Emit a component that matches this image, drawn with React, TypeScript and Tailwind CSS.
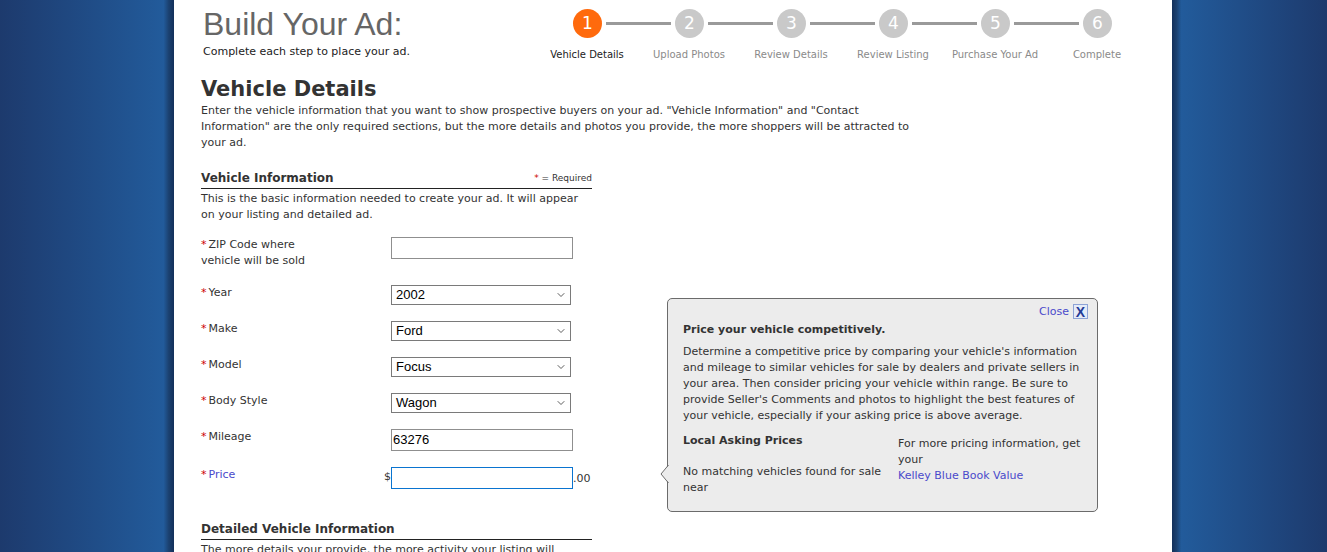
import { ChevronDown } from 'lucide-react';

const steps = ['Vehicle Details', 'Upload Photos', 'Review Details', 'Review Listing', 'Purchase Your Ad', 'Complete'];

type Field = { label: string; kind: 'input' | 'select'; value: string };

const fields: Field[] = [
  { label: 'Year', kind: 'select', value: '2002' },
  { label: 'Make', kind: 'select', value: 'Ford' },
  { label: 'Model', kind: 'select', value: 'Focus' },
  { label: 'Body Style', kind: 'select', value: 'Wagon' },
  { label: 'Mileage', kind: 'input', value: '63276' },
];

function Req() {
  return <span className="mr-[2px] text-[#cc0000]">*</span>;
}

function Stepper() {
  return (
    <div className="mt-[9px] w-[612px]">
      <div className="flex items-center pl-[37px]">
        {steps.map((s, i) => (
          <div key={s} className="flex items-center">
            {i > 0 ? <div className="mx-[4px] h-[3px] w-[65px] bg-[#9a9a9a]" /> : null}
            <div
              className={`flex h-[29px] w-[29px] items-center justify-center rounded-full text-[17px] leading-none text-white ${i === 0 ? 'bg-[#ff6a0d]' : 'bg-[#c9c9c9]'}`}
            >
              {i + 1}
            </div>
          </div>
        ))}
      </div>
      <div className="mt-[10px] grid grid-cols-6">
        {steps.map((s, i) => (
          <div key={s} className={`text-center text-[10px] leading-[14px] ${i === 0 ? 'text-[#222]' : 'text-[#8a8a8a]'}`}>
            {s}
          </div>
        ))}
      </div>
    </div>
  );
}

function Popup() {
  return (
    <div className="absolute left-[493px] top-[298px] w-[431px] rounded-[5px] border border-[#6b6b6b] bg-[#ececec] pb-[15px] pl-[15px] pr-[9px] pt-[5px] text-[11px] leading-[16px] text-[#333]">
      <svg className="absolute left-[-8px] top-[166px]" width="9" height="18" viewBox="0 0 9 18">
        <polygon points="9,0 1,9 9,18" fill="#ececec" />
        <polyline points="8.5,0 1,9 8.5,18" fill="none" stroke="#6b6b6b" strokeWidth="1" />
      </svg>
      <div className="flex h-[15px] items-center justify-end gap-[4px]">
        <span className="text-[#4a4acb]">Close</span>
        <span className="flex h-[15px] w-[15px] items-center justify-center border border-[#8ea3d6] bg-[#e4ebf8] font-['Liberation_Sans',Arial,sans-serif] text-[14px] font-bold leading-none text-[#233a96]">
          X
        </span>
      </div>
      <div className="mt-[3px] font-bold">Price your vehicle competitively.</div>
      <p className="mt-[6px] w-[400px]">
        Determine a competitive price by comparing your vehicle's information and mileage to similar vehicles for sale by dealers
        and private sellers in your area. Then consider pricing your vehicle within range. Be sure to provide Seller's Comments
        and photos to highlight the best features of your vehicle, especially if your asking price is above average.
      </p>
      <div className="mt-[9px] flex">
        <div className="w-[215px]">
          <div className="font-bold">Local Asking Prices</div>
          <div className="mt-[15px] w-[200px]">No matching vehicles found for sale near</div>
        </div>
        <div className="mt-[3px] w-[190px]">
          For more pricing information, get your
          <div className="text-[#4a4acb]">Kelley Blue Book Value</div>
        </div>
      </div>
    </div>
  );
}

export default function App() {
  return (
    <div className="flex h-[552px] w-full overflow-hidden font-['DejaVu_Sans',Verdana,sans-serif]">
      <div className="w-[174px] shrink-0 bg-[linear-gradient(to_right,#1d3a6d,#225b9b_94%,#1b4170_97%,#13305a)]" />
      <main className="relative w-[998px] shrink-0 bg-white pl-[27px] text-[#333]">
        <div className="flex">
          <div className="w-[335px]">
            <h1 className="mt-[6px] pl-[2px] font-['Liberation_Sans',Arial,sans-serif] text-[32px] leading-[36px] text-[#666]">Build Your Ad:</h1>
            <div className="mt-[2px] pl-[2px] text-[11px] leading-[16px] text-[#222]">Complete each step to place your ad.</div>
          </div>
          <Stepper />
        </div>

        <h2 className="mt-[13px] text-[21px] font-bold leading-[28px] text-[#333]">Vehicle Details</h2>
        <p className="w-[715px] text-[11px] leading-[16px]">
          Enter the vehicle information that you want to show prospective buyers on your ad. "Vehicle Information" and "Contact
          Information" are the only required sections, but the more details and photos you provide, the more shoppers will be
          attracted to your ad.
        </p>

        <section className="mt-[19px] w-[391px] text-[11px] leading-[16px]">
          <div className="flex items-end justify-between border-b border-[#222] pb-[2px]">
            <span className="text-[12px] font-bold text-[#333]">Vehicle Information</span>
            <span className="text-[9px] text-[#333]">
              <span className="text-[#cc0000]">*</span> = Required
            </span>
          </div>
          <p className="mt-[2px]">This is the basic information needed to create your ad. It will appear on your listing and detailed ad.</p>

          <div className="mt-[14px] flex flex-col gap-[16px]">
            <div className="flex">
              <div className="w-[190px]">
                <Req />
                ZIP Code where
                <br />
                vehicle will be sold
              </div>
              <input className="h-[22px] w-[182px] border border-[#8f8f8f] bg-white px-[3px] text-[12px] outline-none" />
            </div>
            {fields.map((f) => (
              <div key={f.label} className="flex">
                <div className="w-[190px]">
                  <Req />
                  {f.label}
                </div>
                {f.kind === 'select' ? (
                  <div className="flex h-[20px] w-[180px] items-center justify-between border border-[#7a7a7a] bg-white pl-[4px] pr-[3px] font-['Liberation_Sans',Arial,sans-serif] text-[13px] text-black">
                    <span>{f.value}</span>
                    <ChevronDown size={12} strokeWidth={1.6} className="text-[#333]" />
                  </div>
                ) : (
                  <div className="flex h-[22px] w-[182px] items-center border border-[#8f8f8f] bg-white px-[1px] font-['Liberation_Sans',Arial,sans-serif] text-[13px] text-black">
                    {f.value}
                  </div>
                )}
              </div>
            ))}
            <div className="flex">
              <div className="flex w-[190px] justify-between">
                <span className="text-[#4a4acb]">
                  <Req />
                  Price
                </span>
                <span className="mt-[2px]">$</span>
              </div>
              <div className="h-[22px] w-[182px] border border-[#0a74d0] bg-white" />
              <span className="mt-[4px]">.00</span>
            </div>
          </div>

          <div className="mt-[32px] border-b border-[#222] pb-[2px] text-[12px] font-bold text-[#333]">Detailed Vehicle Information</div>
          <p className="mt-[2px]">The more details your provide, the more activity your listing will receive.</p>
        </section>

        <Popup />
      </main>
      <div className="flex-1 bg-[linear-gradient(to_right,#13305a,#1b4170_3%,#225b9b_6%,#1d3a6d)]" />
    </div>
  );
}
